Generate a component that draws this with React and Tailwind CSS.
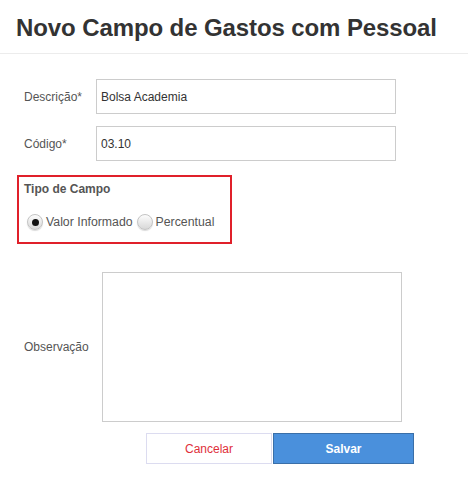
import { useState } from "react";

const Radio = ({ checked, label, onClick }) => (
  <label className="flex items-center cursor-pointer" onClick={onClick}>
    <span className="flex h-[16px] w-[16px] items-center justify-center rounded-full border border-[#c4c4c4] bg-gradient-to-b from-[#fdfdfd] to-[#d8d8d8] shadow-[0_1px_1px_rgba(0,0,0,0.15)]">
      {checked && <span className="h-[7px] w-[7px] rounded-full bg-[#111]" />}
    </span>
    <span className="ml-[3px] text-[12.3px] text-[#555]">{label}</span>
  </label>
);

export default function App() {
  const [tipo, setTipo] = useState("valor");

  return (
    <div className="w-[468px] h-[482px] bg-white font-['Liberation_Sans',Arial,sans-serif]">
      <div className="h-[54px] border-b border-[#ececec] pl-[16px] pt-[14px]">
        <h1 className="text-[24px] leading-[28px] font-bold tracking-[-0.1px] text-[#333]">
          Novo Campo de Gastos com Pessoal
        </h1>
      </div>

      <div className="pl-[24px] pt-[25px]">
        <div className="flex items-center">
          <span className="w-[72px] text-[12px] text-[#555]">Descrição*</span>
          <input
            className="h-[35px] w-[300px] border border-[#ccc] px-[4px] text-[12px] text-[#333] outline-none"
            defaultValue="Bolsa Academia"
          />
        </div>
        <div className="mt-[12px] flex items-center">
          <span className="w-[72px] text-[12px] text-[#555]">Código*</span>
          <input
            className="h-[35px] w-[300px] border border-[#ccc] px-[4px] text-[12px] text-[#333] outline-none"
            defaultValue="03.10"
          />
        </div>

        <div className="-ml-[7px] mt-[14px] h-[69px] w-[215px] border-2 border-[#e0202a] pl-[5px] pt-[3px]">
          <div className="text-[12px] font-bold text-[#555]">Tipo de Campo</div>
          <div className="mt-[15px] flex items-center gap-[4px] pl-[3px]">
            <Radio
              checked={tipo === "valor"}
              label="Valor Informado"
              onClick={() => setTipo("valor")}
            />
            <Radio
              checked={tipo === "percentual"}
              label="Percentual"
              onClick={() => setTipo("percentual")}
            />
          </div>
        </div>

        <div className="mt-[28px] flex items-center">
          <span className="w-[78px] text-[12px] text-[#555]">Observação</span>
          <textarea className="h-[150px] w-[300px] resize-none border border-[#ccc] outline-none" />
        </div>

        <div className="ml-[122px] mt-[11px] flex">
          <button className="h-[31px] w-[126px] border border-[#dcdcf0] bg-white text-[12px] text-[#e0303a]">
            Cancelar
          </button>
          <button className="ml-[1px] h-[31px] w-[141px] border border-[#3a6fa8] bg-[#4a90dc] text-[12px] font-bold text-white">
            Salvar
          </button>
        </div>
      </div>
    </div>
  );
}
